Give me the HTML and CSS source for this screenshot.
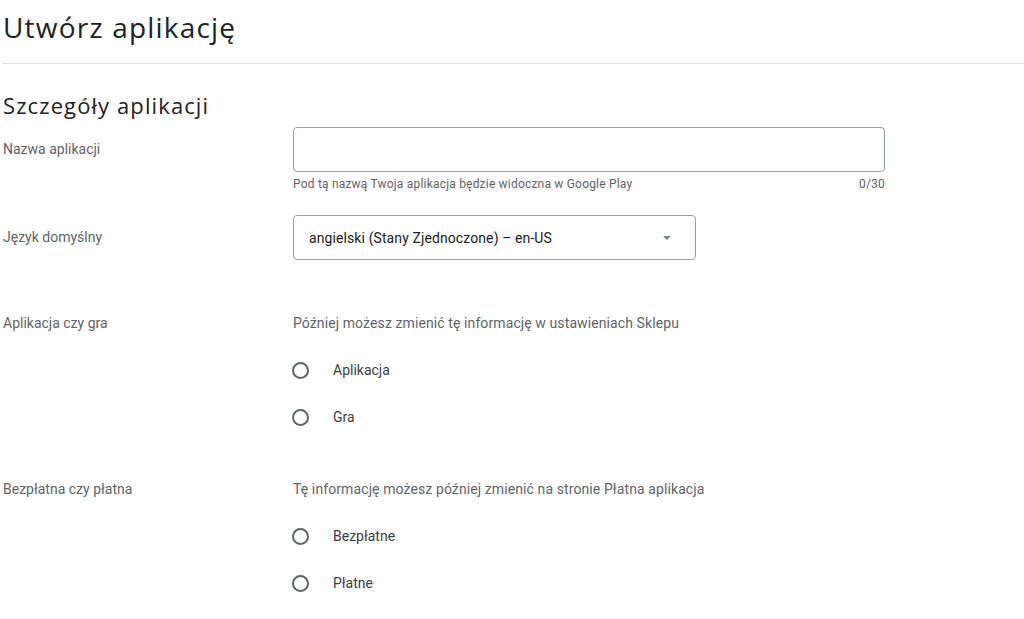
FILE: index.html
```html
<!DOCTYPE html>
<html lang="pl">
<head>
<meta charset="utf-8">
<title>Utwórz aplikację</title>
<link rel="stylesheet" href="styles.css">
</head>
<body>
<div class="page">
  <h1 class="title">Utwórz aplikację</h1>
  <hr class="divider">
  <h2 class="section">Szczegóły aplikacji</h2>

  <div class="row row-name">
    <div class="label label-field">Nazwa aplikacji</div>
    <div class="control">
      <div class="input"></div>
      <div class="hint"><span>Pod tą nazwą Twoja aplikacja będzie widoczna w Google Play</span><span>0/30</span></div>
    </div>
  </div>

  <div class="row row-lang">
    <div class="label label-field">Język domyślny</div>
    <div class="control">
      <div class="select">
        <span class="select-text">angielski (Stany Zjednoczone) – en-US</span>
        <span class="arrow"></span>
      </div>
    </div>
  </div>

  <div class="row row-radio row-type">
    <div class="label">Aplikacja czy gra</div>
    <div class="control">
      <div class="helper">Później możesz zmienić tę informację w ustawieniach Sklepu</div>
      <div class="option"><span class="radio"></span><span class="opt-label">Aplikacja</span></div>
      <div class="option"><span class="radio"></span><span class="opt-label">Gra</span></div>
    </div>
  </div>

  <div class="row row-radio row-price">
    <div class="label">Bezpłatna czy płatna</div>
    <div class="control">
      <div class="helper">Tę informację możesz później zmienić na stronie Płatna aplikacja</div>
      <div class="option"><span class="radio"></span><span class="opt-label">Bezpłatne</span></div>
      <div class="option"><span class="radio"></span><span class="opt-label">Płatne</span></div>
    </div>
  </div>
</div>
</body>
</html>
```

FILE: styles.css
```css
html, body {
  margin: 0;
  padding: 0;
  background: #ffffff;
}

body {
  font-family: Roboto, "Liberation Sans", Arial, sans-serif;
  color: #202124;
  overflow: hidden;
}

.page {
  padding: 9px 0 0 0;
}

.title {
  margin: 0 0 18px 3px;
  font-family: "Open Sans", Roboto, sans-serif;
  font-weight: 400;
  font-size: 28px;
  line-height: 36px;
  letter-spacing: 1.2px;
  color: #202124;
}

.divider {
  margin: 0 0 0 2px;
  border: 0;
  border-top: 1px solid #e0e0e0;
  height: 0;
}

.section {
  margin: 27px 0 8px 3px;
  font-family: "Open Sans", Roboto, sans-serif;
  font-weight: 400;
  font-size: 22px;
  line-height: 28px;
  letter-spacing: 1.1px;
  color: #202124;
}

.row {
  display: grid;
  grid-template-columns: 290px 592px;
  padding-left: 3px;
}

.label {
  font-size: 14px;
  line-height: 20px;
  color: #5f6368;
}

.label-field {
  padding-top: 12px;
}

.input {
  box-sizing: border-box;
  height: 45px;
  border: 1px solid #9aa0a6;
  border-radius: 4px;
}

.hint {
  display: flex;
  justify-content: space-between;
  margin-top: 4px;
  font-size: 12px;
  line-height: 16px;
  letter-spacing: 0.2px;
  color: #5f6368;
}

.row-lang {
  margin-top: 23px;
}

.select {
  box-sizing: border-box;
  width: 403px;
  height: 45px;
  border: 1px solid #9aa0a6;
  border-radius: 4px;
  display: flex;
  align-items: center;
  justify-content: space-between;
  padding: 0 24px 0 15px;
}

.select-text {
  font-size: 14px;
  letter-spacing: 0.1px;
  color: #202124;
}

.arrow {
  width: 0;
  height: 0;
  border-left: 4px solid transparent;
  border-right: 4px solid transparent;
  border-top: 4px solid #80868b;
}

.row-type {
  margin-top: 53px;
}

.row-price {
  margin-top: 52px;
}

.helper {
  font-size: 14px;
  line-height: 20px;
  letter-spacing: 0.1px;
  color: #5f6368;
}

.option {
  display: flex;
  align-items: center;
  height: 20px;
  margin-top: 27px;
}

.radio {
  box-sizing: border-box;
  width: 17px;
  height: 17px;
  border: 2px solid #5f6368;
  border-radius: 50%;
  margin-left: -1px;
}

.opt-label {
  margin-left: 24px;
  font-size: 14px;
  color: #3c4043;
}
```
